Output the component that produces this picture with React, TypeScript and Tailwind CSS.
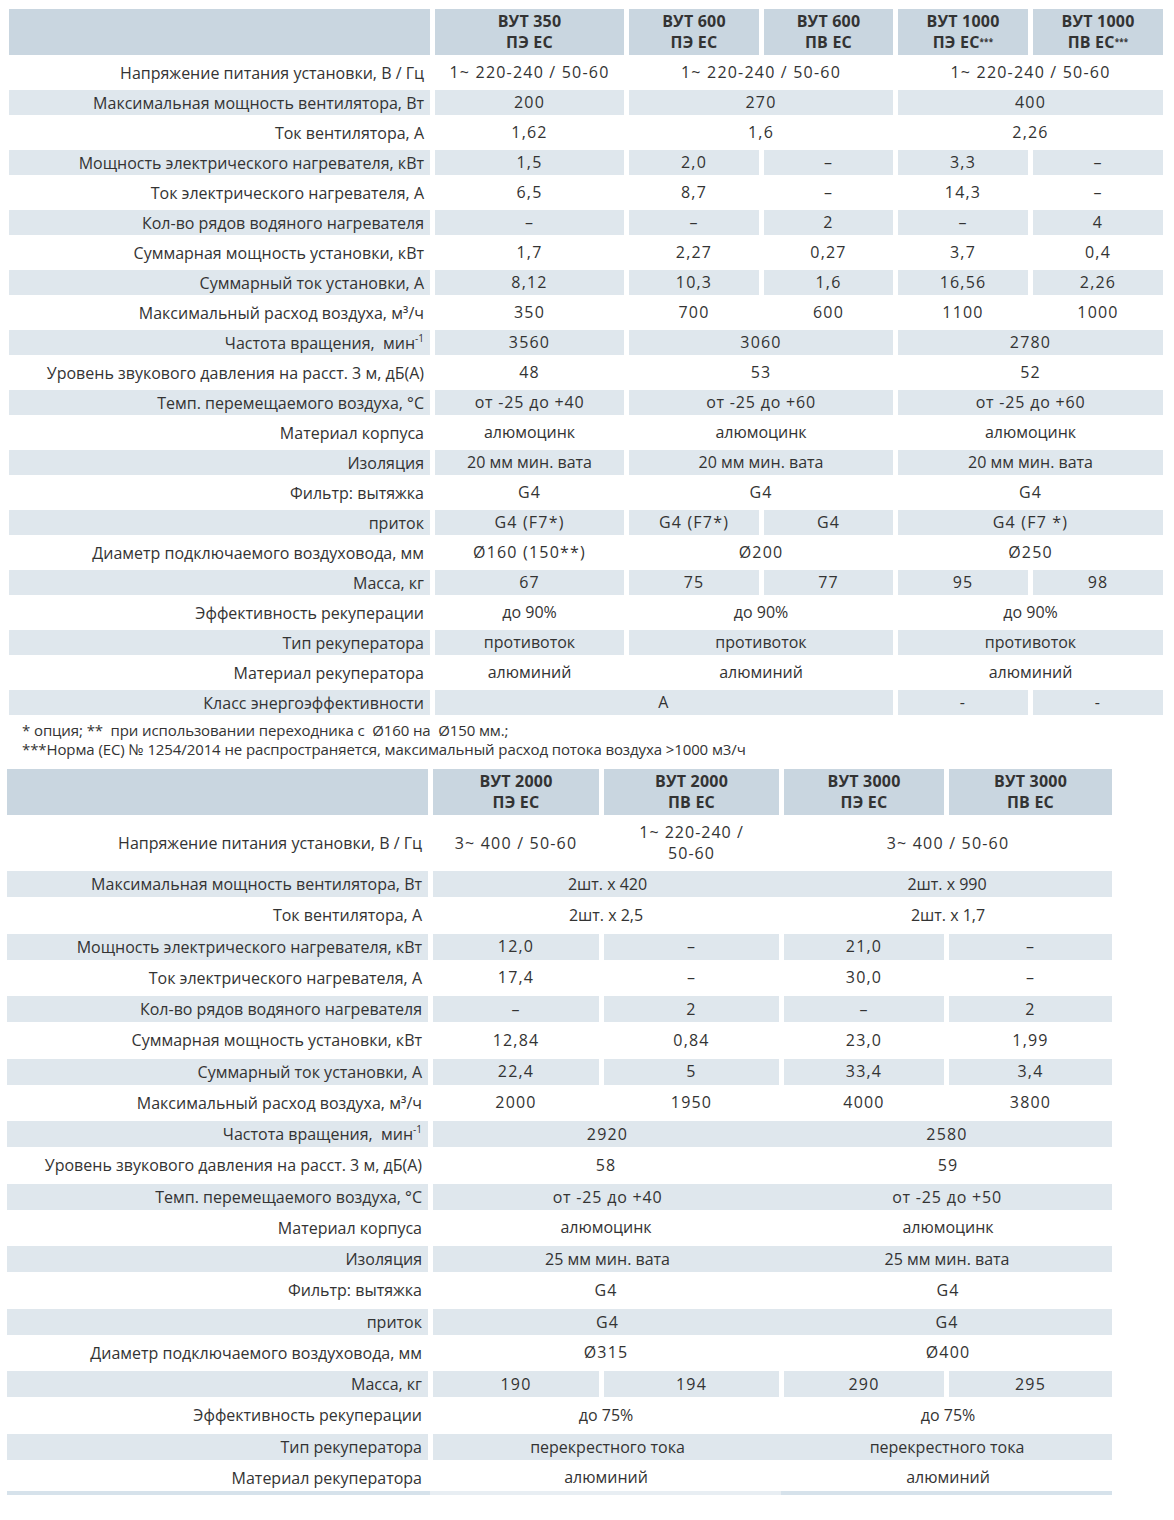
import React from 'react';

type Cell = { t: React.ReactNode; span?: number };
type Row = { label: React.ReactNode; cells: Cell[]; tall?: boolean };

const c = (t: React.ReactNode, span = 1): Cell => ({ t, span });
const x3 = (t: React.ReactNode) => [c(t, 1), c(t, 2), c(t, 2)];
const x2 = (t: React.ReactNode) => [c(t, 2), c(t, 2)];

const spanCls: Record<number, string> = {
  1: '',
  2: 'col-span-2',
  3: 'col-span-3',
  4: 'col-span-4',
};

// the digits in the original are set wider than Open Sans, so numbers get some tracking
const trackCls = (t: React.ReactNode) => {
  if (typeof t !== 'string') return 'tracking-[1px]';
  if (t.startsWith('от ')) return 'tracking-[0.8px]';
  if (/[а-яё]/i.test(t)) return '';
  return 'tracking-[1.2px]';
};

const Stars = () => <sup className="text-[8px] font-bold relative -top-[3px]">***</sup>;

const freq = (
  <>
    Частота вращения,&nbsp; мин<sup className="text-[10px]">-1</sup>
  </>
);

const rows1: Row[] = [
  { label: 'Напряжение питания установки, В / Гц', cells: x3('1~ 220-240 / 50-60') },
  { label: 'Максимальная мощность вентилятора, Вт', cells: [c('200'), c('270', 2), c('400', 2)] },
  { label: 'Ток вентилятора, А', cells: [c('1,62'), c('1,6', 2), c('2,26', 2)] },
  { label: 'Мощность электрического нагревателя, кВт', cells: [c('1,5'), c('2,0'), c('–'), c('3,3'), c('–')] },
  { label: 'Ток электрического нагревателя, А', cells: [c('6,5'), c('8,7'), c('–'), c('14,3'), c('–')] },
  { label: 'Кол-во рядов водяного нагревателя', cells: [c('–'), c('–'), c('2'), c('–'), c('4')] },
  { label: 'Суммарная мощность установки, кВт', cells: [c('1,7'), c('2,27'), c('0,27'), c('3,7'), c('0,4')] },
  { label: 'Суммарный ток установки, А', cells: [c('8,12'), c('10,3'), c('1,6'), c('16,56'), c('2,26')] },
  { label: 'Максимальный расход воздуха, м³/ч', cells: [c('350'), c('700'), c('600'), c('1100'), c('1000')] },
  { label: freq, cells: [c('3560'), c('3060', 2), c('2780', 2)] },
  { label: 'Уровень звукового давления на расст. 3 м, дБ(А)', cells: [c('48'), c('53', 2), c('52', 2)] },
  { label: 'Темп. перемещаемого воздуха, °С', cells: [c('от -25 до +40'), c('от -25 до +60', 2), c('от -25 до +60', 2)] },
  { label: 'Материал корпуса', cells: x3('алюмоцинк') },
  { label: 'Изоляция', cells: x3('20 мм мин. вата') },
  { label: 'Фильтр: вытяжка', cells: x3('G4') },
  { label: 'приток', cells: [c('G4 (F7*)'), c('G4 (F7*)'), c('G4'), c('G4 (F7 *)', 2)] },
  { label: 'Диаметр подключаемого воздуховода, мм', cells: [c('Ø160 (150**)'), c('Ø200', 2), c('Ø250', 2)] },
  { label: 'Масса, кг', cells: [c('67'), c('75'), c('77'), c('95'), c('98')] },
  { label: 'Эффективность рекуперации', cells: x3('до 90%') },
  { label: 'Тип рекуператора', cells: x3('противоток') },
  { label: 'Материал рекуператора', cells: x3('алюминий') },
  { label: 'Класс энергоэффективности', cells: [c('A', 3), c('-'), c('-')] },
];

const rows2: Row[] = [
  {
    label: 'Напряжение питания установки, В / Гц',
    tall: true,
    cells: [
      c('3~ 400 / 50-60'),
      c(
        <>
          1~ 220-240 /<br />
          50-60
        </>
      ),
      c('3~ 400 / 50-60', 2),
    ],
  },
  { label: 'Максимальная мощность вентилятора, Вт', cells: [c('2шт. x 420', 2), c('2шт. x 990', 2)] },
  { label: 'Ток вентилятора, А', cells: [c('2шт. x 2,5', 2), c('2шт. x 1,7', 2)] },
  { label: 'Мощность электрического нагревателя, кВт', cells: [c('12,0'), c('–'), c('21,0'), c('–')] },
  { label: 'Ток электрического нагревателя, А', cells: [c('17,4'), c('–'), c('30,0'), c('–')] },
  { label: 'Кол-во рядов водяного нагревателя', cells: [c('–'), c('2'), c('–'), c('2')] },
  { label: 'Суммарная мощность установки, кВт', cells: [c('12,84'), c('0,84'), c('23,0'), c('1,99')] },
  { label: 'Суммарный ток установки, А', cells: [c('22,4'), c('5'), c('33,4'), c('3,4')] },
  { label: 'Максимальный расход воздуха, м³/ч', cells: [c('2000'), c('1950'), c('4000'), c('3800')] },
  { label: freq, cells: [c('2920', 2), c('2580', 2)] },
  { label: 'Уровень звукового давления на расст. 3 м, дБ(А)', cells: [c('58', 2), c('59', 2)] },
  { label: 'Темп. перемещаемого воздуха, °С', cells: [c('от -25 до +40', 2), c('от -25 до +50', 2)] },
  { label: 'Материал корпуса', cells: x2('алюмоцинк') },
  { label: 'Изоляция', cells: x2('25 мм мин. вата') },
  { label: 'Фильтр: вытяжка', cells: x2('G4') },
  { label: 'приток', cells: x2('G4') },
  { label: 'Диаметр подключаемого воздуховода, мм', cells: [c('Ø315', 2), c('Ø400', 2)] },
  { label: 'Масса, кг', cells: [c('190'), c('194'), c('290'), c('295')] },
  { label: 'Эффективность рекуперации', cells: x2('до 75%') },
  { label: 'Тип рекуператора', cells: x2('перекрестного тока') },
  { label: 'Материал рекуператора', cells: x2('алюминий') },
];

const head1: React.ReactNode[] = [
  <>ВУТ 350<br />ПЭ ЕС</>,
  <>ВУТ 600<br />ПЭ ЕС</>,
  <>ВУТ 600<br />ПВ ЕС</>,
  <>ВУТ 1000<br />ПЭ ЕС<Stars /></>,
  <>ВУТ 1000<br />ПВ ЕС<Stars /></>,
];

const head2: React.ReactNode[] = [
  <>ВУТ 2000<br />ПЭ ЕС</>,
  <>ВУТ 2000<br />ПВ ЕС</>,
  <>ВУТ 3000<br />ПЭ ЕС</>,
  <>ВУТ 3000<br />ПВ ЕС</>,
];

const HEAD_BG = 'bg-[#c9d6e0]';
const ROW_BG = 'bg-[#dfe7ed]';

function SpecTable({
  rows,
  head,
  gridCls,
  rowH,
  joinCls,
}: {
  rows: Row[];
  head: React.ReactNode[];
  gridCls: string;
  rowH: string;
  joinCls?: string;
}) {
  return (
    <div className={`grid gap-[5px] ${gridCls}`}>
      <div className={`h-[46px] ${HEAD_BG}`} />
      {head.map((h, i) => (
        <div
          key={i}
          className={`h-[46px] ${HEAD_BG} flex items-center justify-center text-center font-bold text-[16px] leading-[21px] tracking-[0.2px] text-[#333]`}
        >
          <div>{h}</div>
        </div>
      ))}

      {rows.map((r, i) => {
        const shaded = i % 2 === 1;
        const bg = shaded ? ROW_BG : '';
        const h = r.tall ? 'h-[46px]' : rowH;
        // in the second table the two-cell shaded rows run as one band
        const joined = joinCls && shaded && r.cells.length === 2;
        return (
          <React.Fragment key={i}>
            <div className={`${h} ${bg} flex items-center justify-end pr-[6px] text-right whitespace-nowrap`}>
              {r.label}
            </div>
            {joined ? (
              <div className={`col-span-4 ${h} ${bg} grid ${joinCls}`}>
                {r.cells.map((cell, j) => (
                  <div key={j} className={`flex items-center justify-center ${trackCls(cell.t)}`}>
                    {cell.t}
                  </div>
                ))}
              </div>
            ) : (
              r.cells.map((cell, j) => (
                <div
                  key={j}
                  className={`${spanCls[cell.span ?? 1]} ${h} ${bg} flex items-center justify-center text-center leading-[21px] whitespace-nowrap ${trackCls(cell.t)}`}
                >
                  <div>{cell.t}</div>
                </div>
              ))
            )}
          </React.Fragment>
        );
      })}
    </div>
  );
}

export default function App() {
  return (
    <div className="w-[1174px] min-h-[1520px] bg-white pt-[9px] font-['Open_Sans','DejaVu_Sans',sans-serif] text-[16px] text-[#333]">
      <div className="ml-[9px] w-[1154px]">
        <SpecTable
          rows={rows1}
          head={head1}
          gridCls="grid-cols-[421px_189px_130px_129px_130px_130px]"
          rowH="h-[25px]"
        />
      </div>

      <div className="ml-[22px] mt-[6px] text-[15px] leading-[19px] tracking-[-0.1px] text-[#333]">
        <div>* опция; **&nbsp; при использовании переходника с &nbsp;Ø160 на &nbsp;Ø150 мм.;</div>
        <div>***Норма (ЕС) № 1254/2014 не распространяется, максимальный расход потока воздуха &gt;1000 м3/ч</div>
      </div>

      <div className="ml-[7px] mt-[10px] w-[1105px]">
        <SpecTable
          rows={rows2}
          head={head2}
          gridCls="grid-cols-[421px_166px_175px_160px_163px]"
          rowH="h-[26.25px]"
          joinCls="grid-cols-[349px_1fr]"
        />
        <div className="flex h-[4px]">
          <div className="w-[423px] bg-[#d6e2eb]" />
          <div className="w-[351px] bg-[#e8eef3]" />
          <div className="flex-1 bg-[#d6e2eb]" />
        </div>
      </div>
    </div>
  );
}
